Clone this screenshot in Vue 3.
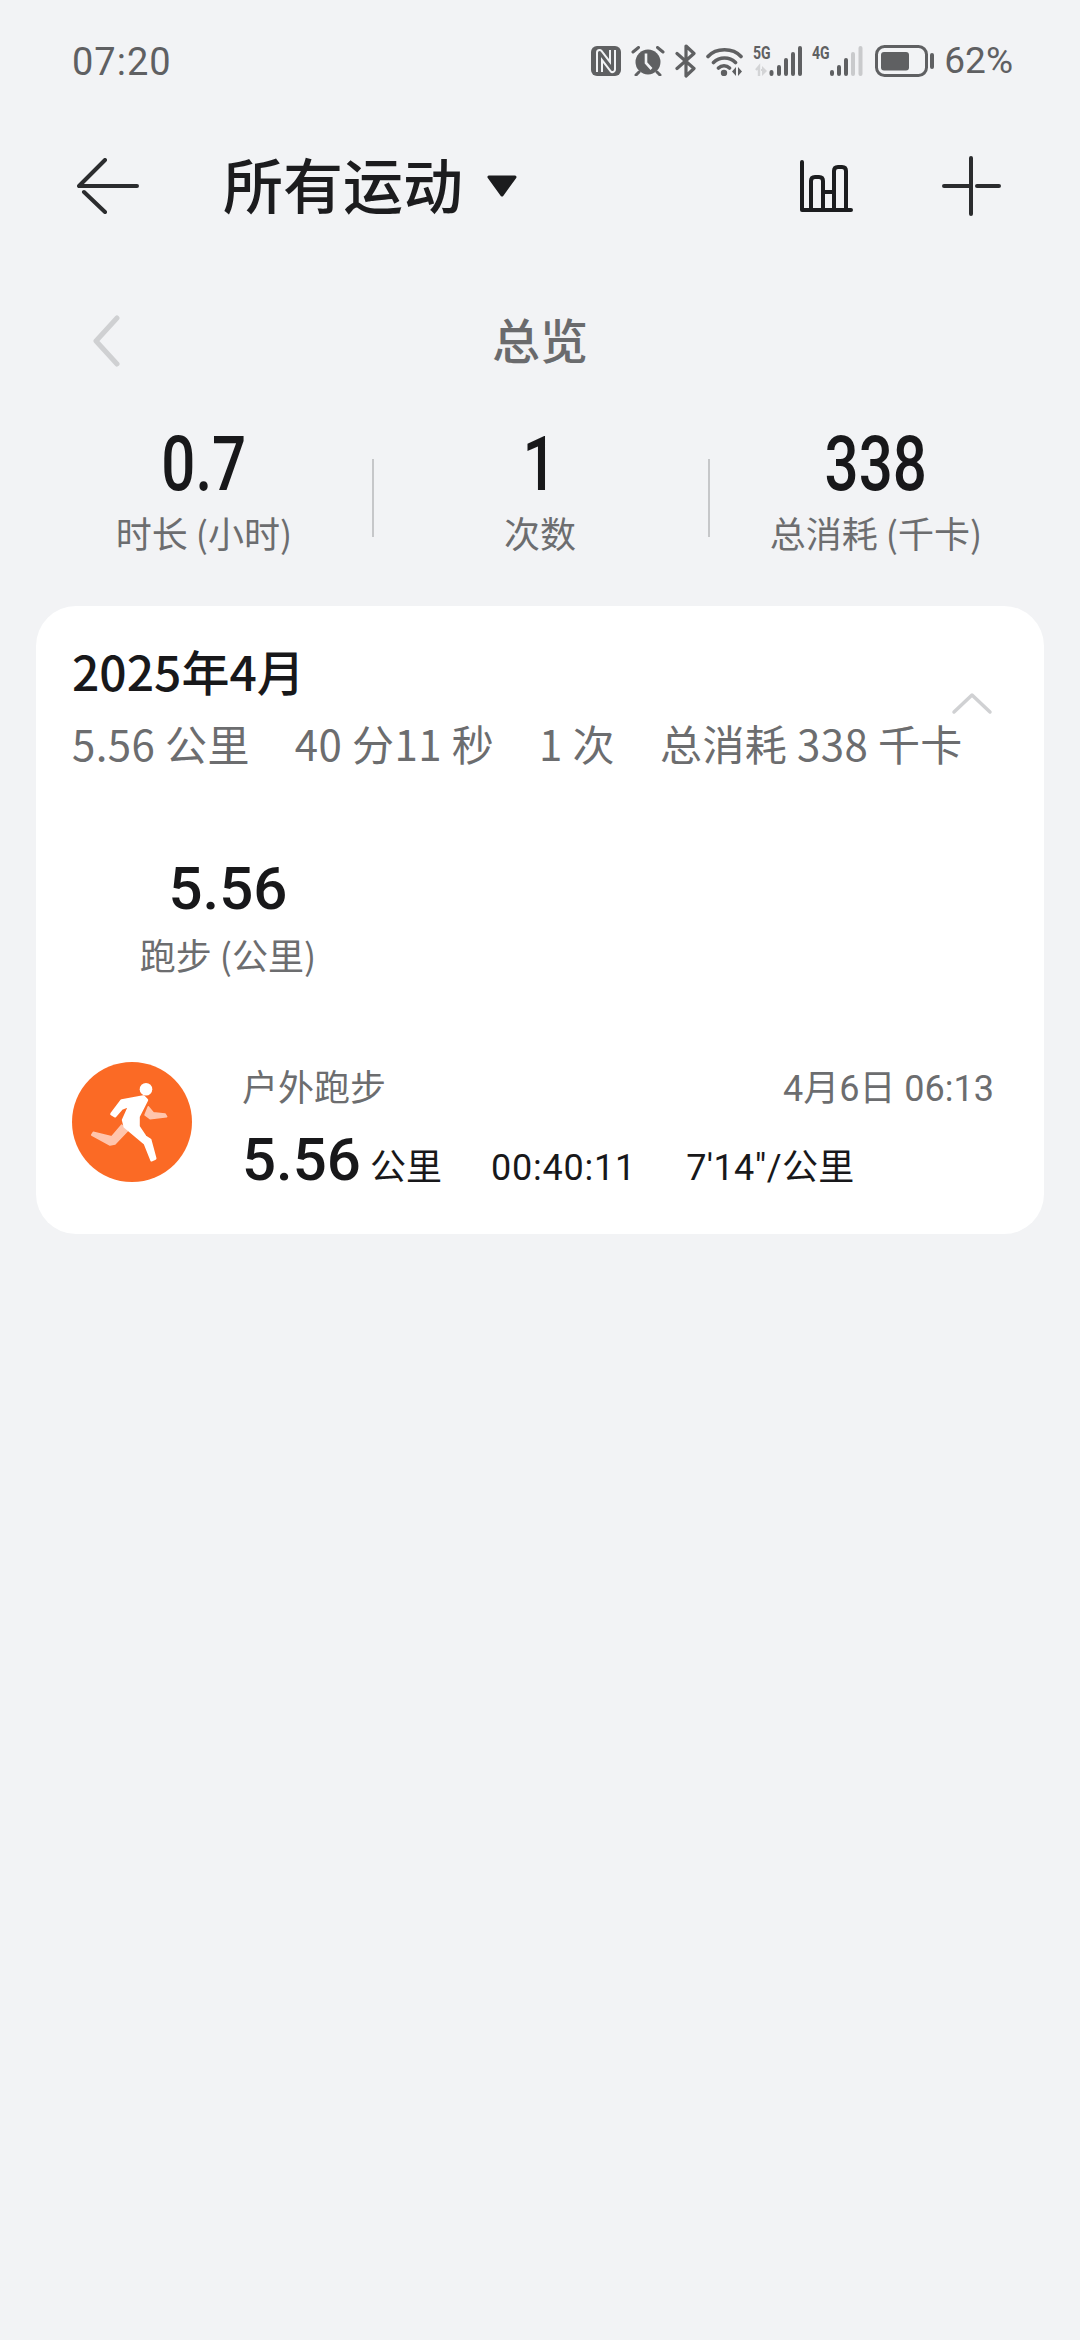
<script setup>
const stats = [
  { value: '0.7', label: '时长 (小时)' },
  { value: '1', label: '次数' },
  { value: '338', label: '总消耗 (千卡)' }
]
</script>

<template>
  <div class="page">
    <header class="status">
      <span class="time">07:20</span>
      <div class="status-right">
        <svg class="sys" width="30" height="30" viewBox="0 0 30 30">
          <rect width="30" height="30" rx="6" fill="#5f6062" />
          <path d="M8.500 26V6.500L21.500 23.500V4" fill="none" stroke="#f2f3f5" stroke-width="7" stroke-linejoin="round" />
          <path d="M8.500 26V6.500L21.500 23.500V4" fill="none" stroke="#5f6062" stroke-width="3" stroke-linejoin="round" />
        </svg>
        <svg class="sys" width="34" height="30" viewBox="0 0 34 30">
          <circle cx="17" cy="16" r="12.500" fill="#5f6062" />
          <path d="M15 7.500V17l5.500 6" fill="none" stroke="#f2f3f5" stroke-width="2.600" />
          <path d="M2 6l5.500-4.500M32 6l-5.500-4.500M5 29l3-3M29 29l-3-3" stroke="#5f6062" stroke-width="3" fill="none" stroke-linecap="round" />
        </svg>
        <svg class="sys bt" width="21" height="34" viewBox="0 0 21 34">
          <path d="M2 9.500l17 15L11 32V2l8 7.500L2 24.500" fill="none" stroke="#5f6062" stroke-width="3.200" stroke-linejoin="round" stroke-linecap="round" />
        </svg>
        <svg class="sys" width="37" height="30" viewBox="0 0 37 30">
          <path d="M2 10.500C10 1.500 27 1.500 35 10.500M7.500 16.500c6-6 16-6 22 0M12.500 22c3-3 8-3 11 0" fill="none" stroke="#5f6062" stroke-width="3.600" stroke-linecap="round" />
          <circle cx="18" cy="27" r="3.200" fill="#5f6062" />
          <path d="M30 21v9l-4-4.500zM32 21v9l4-4.500z" fill="#5f6062" />
        </svg>
        <div class="signal s5">
          <span class="net">5G</span>
          <svg width="49" height="30" viewBox="0 0 49 30">
            <path d="M3 24l3-3.500V30" fill="none" stroke="#d3d4d6" stroke-width="2.400" />
            <path d="M9 20v10l5-5z" fill="#d3d4d6" />
            <path d="M9 24h-1" stroke="#d3d4d6" stroke-width="2" />
            <g stroke="#5f6062" stroke-width="4" stroke-linecap="round">
              <path d="M18.500 26v2M26 21v7M33 14v14M40 8v20M47 2v26" />
            </g>
          </svg>
        </div>
        <div class="signal s4">
          <span class="net">4G</span>
          <svg width="51" height="30" viewBox="0 0 51 30">
            <g stroke-width="4" stroke-linecap="round">
              <path d="M20 26v2M27 21v7M34 14v14" stroke="#5f6062" />
              <path d="M41 8v20M48.500 2v26" stroke="#c9cacc" />
            </g>
          </svg>
        </div>
        <svg class="sys batt" width="59" height="32" viewBox="0 0 59 32">
          <rect x="1.500" y="1.500" width="50" height="29" rx="8" fill="none" stroke="#5f6062" stroke-width="3" />
          <rect x="6" y="7" width="28" height="18.500" rx="3" fill="#5f6062" />
          <rect x="55" y="8" width="4" height="16" rx="2" fill="#5f6062" />
        </svg>
        <span class="pct">62%</span>
      </div>
    </header>

    <nav class="toolbar">
      <svg class="nav-back" width="62" height="56" viewBox="0 0 62 56">
        <path d="M28 2L2 28h58M7 34l21 20" fill="none" stroke="#2b2c2e" stroke-width="4" stroke-linecap="round" stroke-linejoin="round" />
      </svg>
      <h1 class="title">所有运动</h1>
      <svg class="caret" width="30" height="22" viewBox="0 0 30 22">
        <path d="M2 2h26L15 20z" fill="#1c1c1e" stroke="#1c1c1e" stroke-width="3" stroke-linejoin="round" />
      </svg>
      <div class="spacer"></div>
      <svg class="chart" width="54" height="54" viewBox="0 0 54 54">
        <path d="M3 3V51H52M12 51V22q0-4 4-4h4q4 0 4 4V51M24 33H35M35 51V12q0-4 4-4h4q4 0 4 4V51" fill="none" stroke="#1c1d1f" stroke-width="4" stroke-linecap="round" stroke-linejoin="round" />
      </svg>
      <svg class="plus" width="62" height="62" viewBox="0 0 62 62">
        <path d="M31 3v56M4 31h25M37 31h22" fill="none" stroke="#2b2c2e" stroke-width="4" stroke-linecap="round" />
      </svg>
    </nav>

    <div class="overview-head">
      <svg class="prev" width="28" height="52" viewBox="0 0 28 52">
        <path d="M25 3L4 26l21 23" fill="none" stroke="#cfd0d2" stroke-width="5" stroke-linecap="round" stroke-linejoin="round" />
      </svg>
      <span class="overview-title">总览</span>
    </div>

    <section class="stats">
      <div v-for="s in stats" :key="s.label" class="stat">
        <span class="stat-value">{{ s.value }}</span>
        <span class="stat-label">{{ s.label }}</span>
      </div>
    </section>

    <section class="card">
      <h2 class="month">2025年4月</h2>
      <svg class="collapse" width="42" height="24" viewBox="0 0 42 24">
        <path d="M3 21L21 4l18 17" fill="none" stroke="#d0d1d3" stroke-width="3.500" stroke-linecap="round" stroke-linejoin="round" />
      </svg>
      <div class="summary">
        <span>5.56 公里</span>
        <span>40 分11 秒</span>
        <span>1 次</span>
        <span>总消耗 338 千卡</span>
      </div>
      <div class="sport">
        <span class="sport-value">5.56</span>
        <span class="sport-label">跑步 (公里)</span>
      </div>
      <div class="record">
        <div class="badge">
          <svg width="120" height="120" viewBox="0 0 120 120">
            <g fill="#ffc5ad">
              <path d="M76.300 44.700L81.300 50.700L93 52L94.700 54.700L78 56.700L73 53z" stroke="#ffc5ad" stroke-width="1.500" stroke-linejoin="round" />
              <path d="M49.700 63L39.700 74.700L21.300 70.300L19.700 73L38 83L43 82L56.300 68z" stroke="#ffc5ad" stroke-width="1.500" stroke-linejoin="round" />
            </g>
            <g fill="#ffffff">
              <circle cx="74" cy="27.300" r="6.300" />
              <path d="M39.700 52L49.700 38.700L71.300 34.700L74.700 38L66.300 54.700V64.700L73 74.700L78 78L83 96.300L79.700 98L73 81.300L53 64.700L51.300 58L58 43L49.700 46.300L43 54z" stroke="#fff" stroke-width="3" stroke-linejoin="round" />
            </g>
          </svg>
        </div>
        <div class="record-body">
          <div class="record-top">
            <span class="record-name">户外跑步</span>
            <span class="record-date">4月6日 06:13</span>
          </div>
          <div class="record-data">
            <span class="dist"><b>5.56</b> 公里</span>
            <span class="dur">00:40:11</span>
            <span class="pace">7'14"/公里</span>
          </div>
        </div>
      </div>
    </section>
  </div>
</template>

<style>
html, body { margin: 0; background: #f2f3f5; }
</style>

<style scoped>
.page {
  width: 1080px;
  height: 2340px;
  background: #f2f3f5;
  font-family: "Noto Sans CJK SC", "Noto Sans", Roboto, sans-serif;
  box-sizing: border-box;
  overflow: hidden;
}
.status {
  height: 140px;
  box-sizing: border-box;
  padding: 38px 67px 0 72px;
  display: flex;
  justify-content: space-between;
  align-items: flex-start;
  color: #5f6062;
}
.time { font: 38px/48px Roboto, sans-serif; letter-spacing: 1px; }
.status-right { display: flex; align-items: center; height: 46px; }
.sys { display: block; flex: none; }
.status-right > * + * { margin-left: 10px; }
.status-right > .batt { margin-left: 12px; }
.signal { position: relative; display: flex; flex: none; }
.net {
  position: absolute;
  left: 0;
  top: 0;
  font: 700 18px/14px Roboto, sans-serif;
  color: #5f6062;
  transform: scaleX(.78);
  transform-origin: left;
}
.pct { font: 37px/48px Roboto, sans-serif; }

.toolbar {
  height: 92px;
  padding-left: 77px;
  display: flex;
  align-items: center;
}
.title { margin: 0 0 6px 84px; font-size: 60px; font-weight: 500; line-height: 80px; color: #1c1c1e; }
.caret { margin-left: 24px; }
.spacer { flex: 1; }
.chart { margin-right: 87px; }
.plus { margin-right: 78px; }

.overview-head {
  position: relative;
  margin-top: 76px;
  height: 66px;
  display: flex;
  justify-content: center;
  align-items: center;
}
.prev { position: absolute; left: 92px; top: 7px; }
.overview-title { font-size: 48px; font-weight: 500; color: #6a6b6d; line-height: 66px; margin-bottom: 6px; }

.stats {
  margin: 49px 0 0 36px;
  width: 1008px;
  display: grid;
  grid-template-columns: repeat(3, 1fr);
}
.stat {
  display: flex;
  flex-direction: column;
  align-items: center;
  position: relative;
}
.stat + .stat::before {
  content: "";
  position: absolute;
  left: 0;
  top: 36px;
  height: 78px;
  width: 2px;
  background: #c6c7c9;
}
.stat-value {
  font: 500 76px/82px Roboto, sans-serif;
  color: #18181a;
  transform: scaleX(.79);
}
.stat-label { font-size: 36px; line-height: 50px; color: #6c6d6f; margin: 2px 0 3px; }

.card {
  margin: 46px 36px 0;
  width: 1008px;
  height: 628px;
  background: #fff;
  border-radius: 40px;
  box-sizing: border-box;
  padding: 36px 36px 0;
  position: relative;
}
.month { margin: 0; font-size: 48px; line-height: 56px; font-weight: 500; color: #18181a; }
.collapse { position: absolute; right: 51px; top: 85px; }
.summary {
  margin-top: 17px;
  font-size: 42px;
  line-height: 56px;
  color: #6c6d6f;
  display: flex;
  gap: 45px;
  white-space: nowrap;
  letter-spacing: .4px;
}
.sport {
  margin-top: 80px;
  width: 312px;
  display: flex;
  flex-direction: column;
  align-items: center;
}
.sport-value { font: 500 60px/76px Roboto, sans-serif; color: #18181a; }
.sport-label { font-size: 36px; line-height: 50px; color: #6c6d6f; margin-top: 2px; }
.record { margin-top: 83px; display: flex; align-items: flex-start; }
.badge { width: 120px; height: 120px; border-radius: 50%; background: #fb6a25; flex: none; overflow: hidden; }
.badge svg { display: block; }
.record-body { flex: 1; margin: 3px 14px 0 50px; }
.record-top { display: flex; justify-content: space-between; font-size: 36px; line-height: 44px; color: #6c6d6f; }
.record-name { margin-top: -2px; }
.record-date { font-family: Roboto, "Noto Sans CJK SC", sans-serif; font-size: 36px; margin-top: 2px; }
.record-data {
  display: flex;
  align-items: baseline;
  margin-top: 13px;
  color: #18181a;
  font-size: 36px;
  font-family: Roboto, "Noto Sans CJK SC", sans-serif;
}
.dist b { font-size: 60px; font-weight: 500; margin-right: 0; }
.dur { margin-left: 49px; letter-spacing: .8px; }
.pace { margin-left: 50px; letter-spacing: .4px; }
</style>
